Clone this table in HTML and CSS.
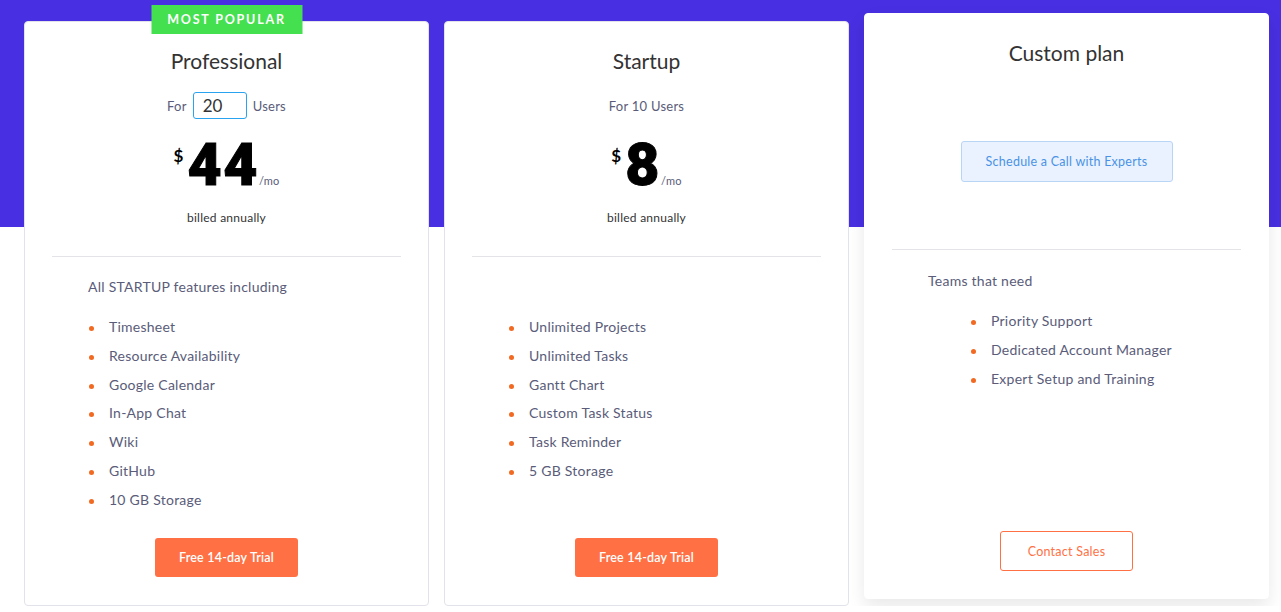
FILE: index.html
```html
<!DOCTYPE html>
<html lang="en">

<head>
    <meta charset="UTF-8">
    <meta name="viewport" content="width=device-width, initial-scale=1.0">
    <title>Pricing</title>
    <link rel="stylesheet" href="styles.css">
</head>

<body>
    <div class="plans">
        <!-- Professional -->
        <div class="card">
            <div class="badge">MOST POPULAR</div>
            <div class="card-head">
                <h3 class="plan-name">Professional</h3>
                <div class="users">
                    For <input class="user-input" type="text" value="20"> Users
                </div>
                <div class="price">
                    <span class="cur">$</span>
                    <span class="num">44</span>
                    <span class="per">/mo</span>
                </div>
                <div class="billed">billed annually</div>
            </div>
            <div class="intro">All STARTUP features including</div>
            <ul class="features">
                <li>Timesheet</li>
                <li>Resource Availability</li>
                <li>Google Calendar</li>
                <li>In-App Chat</li>
                <li>Wiki</li>
                <li>GitHub</li>
                <li>10 GB Storage</li>
            </ul>
            <div class="card-foot">
                <button class="btn-trial">Free 14-day Trial</button>
            </div>
        </div>

        <!-- Startup -->
        <div class="card">
            <div class="card-head">
                <h3 class="plan-name">Startup</h3>
                <div class="users">For 10 Users</div>
                <div class="price">
                    <span class="cur">$</span>
                    <span class="num">8</span>
                    <span class="per">/mo</span>
                </div>
                <div class="billed">billed annually</div>
            </div>
            <div class="intro"></div>
            <ul class="features">
                <li>Unlimited Projects</li>
                <li>Unlimited Tasks</li>
                <li>Gantt Chart</li>
                <li>Custom Task Status</li>
                <li>Task Reminder</li>
                <li>5 GB Storage</li>
            </ul>
            <div class="card-foot">
                <button class="btn-trial">Free 14-day Trial</button>
            </div>
        </div>

        <!-- Custom -->
        <div class="card card-custom">
            <div class="card-head">
                <h3 class="plan-name">Custom plan</h3>
                <button class="btn-call">Schedule a Call with Experts</button>
            </div>
            <div class="intro">Teams that need</div>
            <ul class="features features-wide">
                <li>Priority Support</li>
                <li>Dedicated Account Manager</li>
                <li>Expert Setup and Training</li>
            </ul>
            <div class="card-foot">
                <button class="btn-sales">Contact Sales</button>
            </div>
        </div>
    </div>
</body>

</html>
```

FILE: styles.css
```css
html {
    background-color: #fff;
}

body {
    margin: 0;
    font-family: Lato, "Open Sans", sans-serif;
    letter-spacing: 0.25px;
    background: linear-gradient(#482fe1, #482fe1) no-repeat;
    background-size: 100% 227px;
    color: #5a5c79;
}

.plans {
    display: flex;
    gap: 15px;
    padding: 21px 12px 0 24px;
}

.card {
    position: relative;
    width: 405px;
    height: 585px;
    box-sizing: border-box;
    display: flex;
    flex-direction: column;
    background-color: #fff;
    border: 1px solid #e2e2ea;
    border-radius: 4px;
}

.card-custom {
    height: 586px;
    margin-top: -8px;
    border-color: #fff;
    box-shadow: 0 8px 18px rgba(0, 0, 0, 0.09);
}

.badge {
    position: absolute;
    top: -17px;
    left: 50%;
    transform: translateX(-50%);
    width: 151px;
    height: 29px;
    line-height: 29px;
    text-align: center;
    background-color: #45e04f;
    color: #fff;
    font-size: 12.5px;
    font-weight: 700;
    letter-spacing: 1.8px;
}

.card-head {
    height: 235px;
    box-sizing: border-box;
    margin: 0 27px;
    padding-top: 27px;
    border-bottom: 1px solid #e4e4e8;
    text-align: center;
}

.card-custom .card-head {
    height: 236px;
}

.plan-name {
    margin: 0;
    font-size: 21px;
    line-height: 24px;
    font-weight: 400;
    letter-spacing: 0;
    color: #333;
}

.users {
    display: flex;
    align-items: center;
    justify-content: center;
    gap: 6px;
    height: 27px;
    margin-top: 19px;
    font-size: 13px;
}

.user-input {
    width: 54px;
    height: 27px;
    box-sizing: border-box;
    border: 1px solid #29a3f0;
    border-radius: 3px;
    padding: 0 0 0 9px;
    font-family: inherit;
    font-size: 17px;
    color: #333;
    outline: none;
}

.price {
    display: flex;
    justify-content: center;
    align-items: baseline;
    margin-top: 16px;
    color: #000;
}

.cur {
    align-self: flex-start;
    margin: 12px 4px 0 0;
    font-size: 17px;
    line-height: 18px;
    font-weight: 700;
}

.num {
    font-family: Roboto, sans-serif;
    font-size: 59px;
    line-height: 60px;
    font-weight: 900;
    letter-spacing: 1.5px;
    -webkit-text-stroke: 1px #000;
}

.per {
    font-size: 11px;
    color: #5a5c79;
}

.billed {
    margin-top: 15px;
    font-size: 12px;
    line-height: 16px;
    color: #333;
}

.intro {
    height: 20px;
    margin: 20px 0 0 63px;
    font-size: 14px;
    line-height: 20px;
}

.card-custom .intro {
    margin-top: 21px;
}

.features {
    list-style: none;
    margin: 16px 0 0;
    padding: 0 0 0 84px;
    font-size: 14px;
    line-height: 28.8px;
}

.features-wide {
    padding-left: 126px;
}

.features li {
    position: relative;
}

.features li::before {
    content: "";
    position: absolute;
    left: -20px;
    top: 13px;
    width: 5px;
    height: 5px;
    border-radius: 50%;
    background-color: #f26a22;
}

.card-foot {
    margin-top: auto;
    padding-bottom: 28px;
    text-align: center;
}

.card-custom .card-foot {
    padding-bottom: 27px;
}

.btn-trial {
    width: 143px;
    height: 39px;
    border: none;
    border-radius: 3px;
    background-color: #ff7145;
    color: #fff;
    font-family: inherit;
    font-size: 12.5px;
    font-weight: 600;
    letter-spacing: 0.2px;
}

.btn-call {
    width: 212px;
    height: 41px;
    margin-top: 76px;
    border: 1px solid #b9d5f6;
    border-radius: 3px;
    background-color: #e9f2fe;
    color: #4a92e6;
    font-family: inherit;
    font-size: 12.5px;
    letter-spacing: 0.25px;
}

.btn-sales {
    width: 133px;
    height: 40px;
    border: 1px solid #ff7145;
    border-radius: 3px;
    background-color: #fff;
    color: #ff7145;
    font-family: inherit;
    font-size: 12.5px;
    letter-spacing: 0.25px;
}
```
